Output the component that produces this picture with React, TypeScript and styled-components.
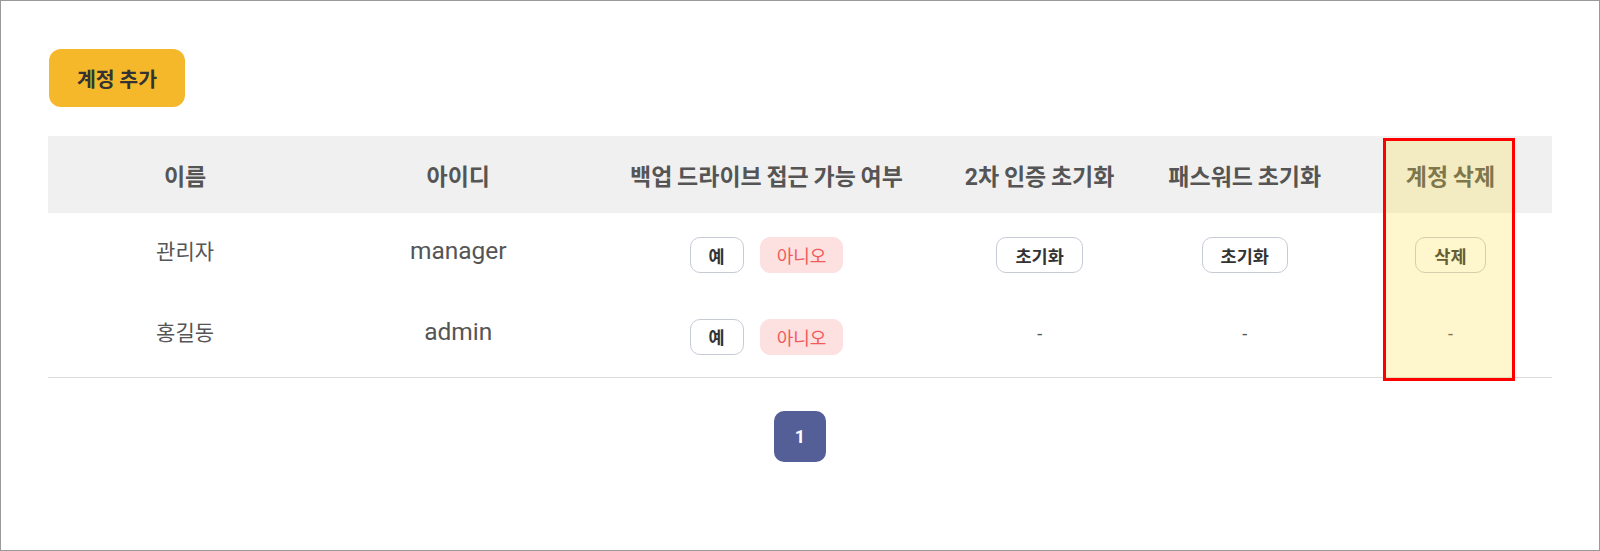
import React from "react";
import styled, { createGlobalStyle } from "styled-components";

const GlobalStyle = createGlobalStyle`
  html, body {
    margin: 0;
    padding: 0;
    background: #ffffff;
  }
  body {
    font-family: Roboto, "Noto Sans CJK KR", "Noto Sans", sans-serif;
    color: #555555;
  }
  * { box-sizing: border-box; }
`;

const Page = styled.div`
  width: 1600px;
  height: 551px;
  border: 1px solid #9a9a9a;
  padding: 47px 47px 0 47px;
  display: flex;
  flex-direction: column;
  align-items: flex-start;
  background: #ffffff;
`;

const AddButton = styled.button`
  width: 136px;
  height: 58px;
  margin-left: 1px;
  margin-top: 1px;
  border: none;
  border-radius: 12px;
  background: #f5b82a;
  color: #333333;
  font-family: "Noto Sans CJK KR", sans-serif;
  font-size: 20.5px;
  font-weight: 700;
  cursor: pointer;
  padding: 0;
`;

const TableWrap = styled.div`
  position: relative;
  width: 100%;
  margin-top: 29px;
`;

const Table = styled.table`
  width: 100%;
  border-collapse: collapse;
  table-layout: fixed;
`;

const HeadRow = styled.tr`
  background: #f0f0f0;
`;

const Th = styled.th`
  height: 77px;
  padding: 0;
  font-family: Roboto, "Noto Sans CJK KR", sans-serif;
  font-size: 23px;
  word-spacing: -1px;
  font-weight: 700;
  color: #555555;
  text-align: center;
  vertical-align: middle;
`;

const BodyRow = styled.tr`
  &:last-child td {
    border-bottom: 1px solid #dcdcdc;
  }
`;

const Td = styled.td<{ $text?: boolean }>`
  height: 82px;
  padding: ${(p) => (p.$text ? "0 0 9px 0" : "2px 0 0 0")};
  font-family: "Noto Sans CJK KR", sans-serif;
  font-size: 21px;
  font-weight: 400;
  color: #555555;
  text-align: center;
  vertical-align: middle;
`;

const IdText = styled.span`
  font-family: Roboto, sans-serif;
  font-size: 24.5px;
  color: #555555;
`;

const Choice = styled.div`
  display: inline-flex;
  gap: 16px;
  align-items: center;
`;

const OutlineButton = styled.button`
  height: 36px;
  padding: 0 18px;
  border: 1px solid #c6cbd6;
  border-radius: 10px;
  background: #ffffff;
  color: #333333;
  font-family: "Noto Sans CJK KR", sans-serif;
  font-size: 17.5px;
  font-weight: 700;
  cursor: pointer;
`;

const DangerPill = styled.button`
  height: 36px;
  padding: 0 16px;
  border: 1px solid #fde0e0;
  border-radius: 10px;
  background: #fde0e0;
  color: #f25a5a;
  font-family: "Noto Sans CJK KR", sans-serif;
  font-size: 18px;
  font-weight: 400;
  cursor: pointer;
`;

const Dash = styled.span`
  font-family: Roboto, sans-serif;
  font-size: 18px;
  color: #555555;
`;

const Highlight = styled.div`
  position: absolute;
  top: 2px;
  right: 37px;
  width: 132px;
  height: 243px;
  border: 3px solid #ff0000;
  background: rgba(250, 220, 50, 0.25);
  pointer-events: none;
`;

const Pagination = styled.div`
  width: 100%;
  display: flex;
  justify-content: center;
  margin-top: 33px;
`;

const PageButton = styled.button`
  width: 52px;
  height: 51px;
  border: none;
  border-radius: 10px;
  background: #535f96;
  color: #ffffff;
  font-family: Roboto, sans-serif;
  font-size: 18px;
  font-weight: 700;
  padding: 0;
`;

const columns = [274, 272, 344, 202, 208, 203];
const headers = ["이름", "아이디", "백업 드라이브 접근 가능 여부", "2차 인증 초기화", "패스워드 초기화", "계정 삭제"];

type Account = { name: string; id: string; manageable: boolean };

const accounts: Account[] = [
  { name: "관리자", id: "manager", manageable: true },
  { name: "홍길동", id: "admin", manageable: false },
];

export default function App() {
  return (
    <>
      <GlobalStyle />
      <Page>
        <AddButton>계정 추가</AddButton>
        <TableWrap>
          <Table>
            <colgroup>
              {columns.map((w, i) => (
                <col key={i} style={{ width: `${w}px` }} />
              ))}
            </colgroup>
            <thead>
              <HeadRow>
                {headers.map((h) => (
                  <Th key={h}>{h}</Th>
                ))}
              </HeadRow>
            </thead>
            <tbody>
              {accounts.map((a) => (
                <BodyRow key={a.id}>
                  <Td $text>{a.name}</Td>
                  <Td $text>
                    <IdText>{a.id}</IdText>
                  </Td>
                  <Td>
                    <Choice>
                      <OutlineButton>예</OutlineButton>
                      <DangerPill>아니오</DangerPill>
                    </Choice>
                  </Td>
                  {a.manageable ? (
                    <Td>
                      <OutlineButton>초기화</OutlineButton>
                    </Td>
                  ) : (
                    <Td $text>
                      <Dash>-</Dash>
                    </Td>
                  )}
                  {a.manageable ? (
                    <Td>
                      <OutlineButton>초기화</OutlineButton>
                    </Td>
                  ) : (
                    <Td $text>
                      <Dash>-</Dash>
                    </Td>
                  )}
                  {a.manageable ? (
                    <Td>
                      <OutlineButton>삭제</OutlineButton>
                    </Td>
                  ) : (
                    <Td $text>
                      <Dash>-</Dash>
                    </Td>
                  )}
                </BodyRow>
              ))}
            </tbody>
          </Table>
          <Highlight />
        </TableWrap>
        <Pagination>
          <PageButton>1</PageButton>
        </Pagination>
      </Page>
    </>
  );
}
